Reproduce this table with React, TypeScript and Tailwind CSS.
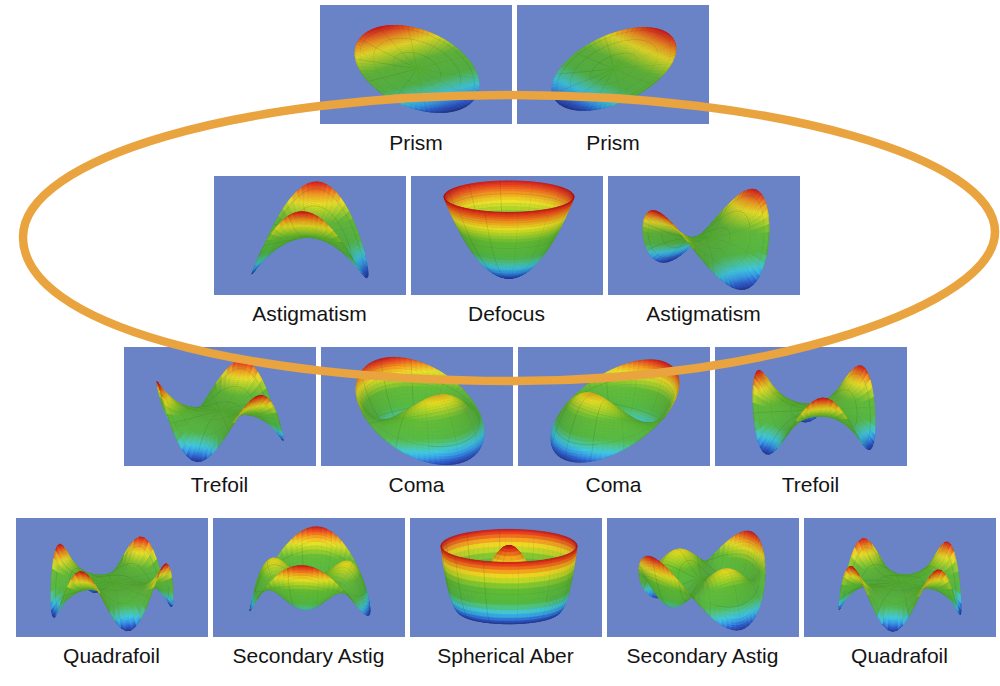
import { Fragment, useMemo } from "react";

type Tile = {
  label: string;
  fn: (r: number, t: number) => number;
  zs: number;
  s: number;
  cx: number;
  cy: number;
  elev?: number;
};

// Zernike terms, left = sin, right = cos
const ROWS: { pad: string; tiles: Tile[] }[] = [
  {
    pad: "pl-[29px]",
    tiles: [
      { label: "Prism", fn: (r, t) => r * Math.sin(t), zs: 0.44, s: 62, cx: 97, cy: 64 },
      { label: "Prism", fn: (r, t) => r * Math.cos(t), zs: 0.44, s: 62, cx: 97, cy: 64 },
    ],
  },
  {
    pad: "pl-[13px]",
    tiles: [
      { label: "Astigmatism", fn: (r, t) => r * r * Math.sin(2 * t), zs: 0.7, s: 58, cx: 96, cy: 60, elev: 15 },
      { label: "Defocus", fn: (r) => 2 * r * r - 1, zs: 0.64, s: 65, cx: 98, cy: 61, elev: 14 },
      { label: "Astigmatism", fn: (r, t) => r * r * Math.cos(2 * t), zs: 0.62, s: 63, cx: 98, cy: 62, elev: 16 },
    ],
  },
  {
    pad: "pl-[30px]",
    tiles: [
      { label: "Trefoil", fn: (r, t) => r ** 3 * Math.sin(3 * t), zs: 0.53, s: 63, cx: 96, cy: 64 },
      { label: "Coma", fn: (r, t) => (3 * r ** 3 - 2 * r) * Math.sin(t), zs: 0.59, s: 64, cx: 99, cy: 64 },
      { label: "Coma", fn: (r, t) => (3 * r ** 3 - 2 * r) * Math.cos(t), zs: 0.59, s: 64, cx: 97, cy: 64 },
      { label: "Trefoil", fn: (r, t) => r ** 3 * Math.cos(3 * t), zs: 0.55, s: 61, cx: 99, cy: 63 },
    ],
  },
  {
    pad: "pl-[11px]",
    tiles: [
      { label: "Quadrafoil", fn: (r, t) => r ** 4 * Math.sin(4 * t), zs: 0.5, s: 61, cx: 96, cy: 65 },
      { label: "Secondary Astig", fn: (r, t) => (4 * r ** 4 - 3 * r * r) * Math.sin(2 * t), zs: 0.58, s: 60, cx: 97, cy: 61 },
      { label: "Spherical Aber", fn: (r) => 6 * r ** 4 - 6 * r * r + 1, zs: 0.67, s: 68, cx: 99, cy: 72, elev: 14 },
      { label: "Secondary Astig", fn: (r, t) => (4 * r ** 4 - 3 * r * r) * Math.cos(2 * t), zs: 0.58, s: 63, cx: 95, cy: 61 },
      { label: "Quadrafoil", fn: (r, t) => r ** 4 * Math.cos(4 * t), zs: 0.5, s: 61, cx: 96, cy: 65 },
    ],
  },
];

const STOPS: number[][] = [
  [0, 40, 56, 150],
  [0.06, 45, 90, 205],
  [0.13, 55, 160, 235],
  [0.2, 64, 205, 225],
  [0.28, 80, 200, 140],
  [0.36, 86, 188, 64],
  [0.58, 100, 190, 52],
  [0.68, 170, 212, 40],
  [0.77, 240, 228, 36],
  [0.86, 248, 160, 28],
  [0.94, 240, 76, 24],
  [1, 214, 24, 24],
];

function colorAt(t: number, shade: number) {
  const v = Math.min(1, Math.max(0, t));
  let k = 0;
  while (k < STOPS.length - 2 && v > STOPS[k + 1][0]) k++;
  const a = STOPS[k];
  const b = STOPS[k + 1];
  const f = (v - a[0]) / (b[0] - a[0]);
  const ch = (n: number) => Math.round(Math.min(255, (a[n] + (b[n] - a[n]) * f) * shade));
  return `rgb(${ch(1)},${ch(2)},${ch(3)})`;
}

// rings get denser towards the rim, where these surfaces are steepest
const NR = 36;
const NT = 72;

type Quad = { pts: string; fill: string; depth: number; line: string };

function buildMesh(tile: Tile): Quad[] {
  const phi = (38 * Math.PI) / 180;
  const e = ((tile.elev ?? 19) * Math.PI) / 180;
  const se = Math.sin(e);
  const ce = Math.cos(e);
  const cp = Math.cos(phi);
  const sp = Math.sin(phi);
  const cam = [-ce * sp, -ce * cp, se];

  const V: { sx: number; sy: number; x: number; y: number; zz: number; z: number; dep: number }[][] = [];
  let zmin = Infinity;
  let zmax = -Infinity;
  for (let i = 0; i <= NR; i++) {
    const r = Math.sin(((i / NR) * Math.PI) / 2);
    const row = [];
    for (let j = 0; j <= NT; j++) {
      const t = (j / NT) * Math.PI * 2;
      const x = r * Math.cos(t);
      const y = r * Math.sin(t);
      const z = tile.fn(r, t);
      zmin = Math.min(zmin, z);
      zmax = Math.max(zmax, z);
      const zz = z * tile.zs;
      const X = x * cp - y * sp;
      const D = x * sp + y * cp;
      row.push({
        sx: tile.cx + tile.s * X,
        sy: tile.cy - tile.s * (D * se + zz * ce),
        x,
        y,
        zz,
        z,
        dep: -D * ce + zz * se,
      });
    }
    V.push(row);
  }

  const quads: Quad[] = [];
  const p = (v: { sx: number; sy: number }) => `${v.sx.toFixed(2)},${v.sy.toFixed(2)}`;
  for (let i = 0; i < NR; i++) {
    for (let j = 0; j < NT; j++) {
      const a = V[i][j];
      const b = V[i + 1][j];
      const c = V[i + 1][j + 1];
      const d = V[i][j + 1];
      const d1 = [c.x - a.x, c.y - a.y, c.zz - a.zz];
      const d2 = [d.x - b.x, d.y - b.y, d.zz - b.zz];
      const n = [
        d1[1] * d2[2] - d1[2] * d2[1],
        d1[2] * d2[0] - d1[0] * d2[2],
        d1[0] * d2[1] - d1[1] * d2[0],
      ];
      const len = Math.hypot(n[0], n[1], n[2]);
      const dot = len > 1e-9 ? Math.abs((n[0] * cam[0] + n[1] * cam[1] + n[2] * cam[2]) / len) : 1;
      const zc = (a.z + b.z + c.z + d.z) / 4;
      const t = (zc - zmin) / (zmax - zmin);
      let line = "";
      if (j % 6 === 0) line += `M${p(a)}L${p(b)}`;
      if ((i + 1) % 9 === 0) line += `M${p(b)}L${p(c)}`;
      quads.push({
        pts: `${p(a)} ${p(b)} ${p(c)} ${p(d)}`,
        fill: colorAt(t, 0.84 + 0.16 * dot),
        depth: (a.dep + b.dep + c.dep + d.dep) / 4,
        line,
      });
    }
  }
  quads.sort((q1, q2) => q1.depth - q2.depth);
  return quads;
}

function Surface({ tile }: { tile: Tile }) {
  const quads = useMemo(() => buildMesh(tile), [tile]);
  return (
    <svg viewBox="0 0 192 119" className="block w-full h-full">
      {quads.map((q, k) => (
        <Fragment key={k}>
          <polygon points={q.pts} fill={q.fill} stroke={q.fill} strokeWidth={0.4} strokeLinejoin="round" />
          {q.line && <path d={q.line} fill="none" stroke="#0b2a10" strokeOpacity={0.22} strokeWidth={0.55} />}
        </Fragment>
      ))}
    </svg>
  );
}

export default function App() {
  return (
    <div className="relative w-[1000px] h-[686px] bg-white overflow-hidden font-['Liberation_Sans',Arial,sans-serif]">
      <div className="flex flex-col gap-[21px] pt-[5px]">
        {ROWS.map((row, ri) => (
          <div key={ri} className={`flex justify-center gap-[5px] ${row.pad}`}>
            {row.tiles.map((tile, ti) => (
              <div key={ti} className="flex flex-col items-center w-[192px]">
                <div className="w-[192px] h-[119px] bg-[#6a83c6]">
                  <Surface tile={tile} />
                </div>
                <p className="mt-[7px] h-[24px] text-[21px] leading-[24px] text-[#141414] whitespace-nowrap">
                  {tile.label}
                </p>
              </div>
            ))}
          </div>
        ))}
      </div>

      {/* hand-drawn highlight ring round row two */}
      <svg viewBox="0 0 1000 686" className="absolute inset-0 w-full h-full pointer-events-none">
        <path
          d="M23 237 C23 158 241 95 509 95 C777 95 995 158 995 232 C995 305 770 381 515 381 C240 381 23 325 23 237 Z"
          fill="none"
          stroke="#e9a43f"
          strokeWidth={8.5}
        />
      </svg>
    </div>
  );
}
